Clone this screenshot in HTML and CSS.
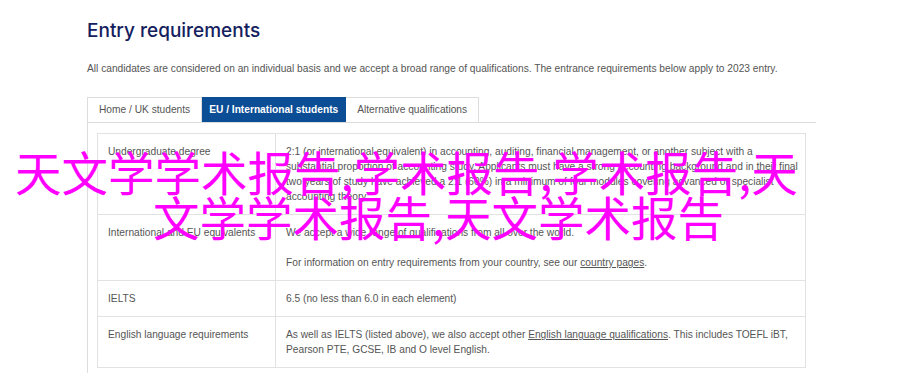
FILE: index.html
```html
<!DOCTYPE html>
<html lang="en">

<head>
  <meta charset="UTF-8">
  <meta name="viewport" content="width=device-width, initial-scale=1.0">
  <title>Entry requirements</title>
  <link rel="stylesheet" href="styles.css">
</head>

<body>
  <div class="page">
    <h1>Entry requirements</h1>
    <p class="intro">All candidates are considered on an individual basis and we accept a broad range of qualifications. The entrance requirements below apply to 2023 entry.</p>

    <div class="tabs">
      <span class="tab">Home / UK students</span>
      <span class="tab active">EU / International students</span>
      <span class="tab">Alternative qualifications</span>
    </div>

    <div class="panel">
      <table class="req">
        <tr class="r1">
          <td class="label">Undergraduate degree</td>
          <td>2:1 (or international equivalent) in accounting, auditing, financial management, or another subject with a substantial proportion of accounting study. Applicants must have a strong accounting background and in their final two years of study have achieved a 2:1 (60%) in a minimum of four modules covering advanced or specialist accounting theory.</td>
        </tr>
        <tr>
          <td class="label">International and EU equivalents</td>
          <td>
            <p>We accept a wide range of qualifications from all over the world.</p>
            <p>For information on entry requirements from your country, see our <a href="#">country pages</a>.</p>
          </td>
        </tr>
        <tr>
          <td class="label">IELTS</td>
          <td>6.5 (no less than 6.0 in each element)</td>
        </tr>
        <tr>
          <td class="label">English language requirements</td>
          <td>As well as IELTS (listed above), we also accept other <a href="#">English language qualifications</a>. This includes TOEFL iBT, Pearson PTE, GCSE, IB and O level English.</td>
        </tr>
      </table>
    </div>
  </div>

  <div class="stamp">
    <span class="l1">天文学学术报告,学术报告,学术报告,天</span>
    <span class="l2">文学学术报告,天文学术报告</span>
  </div>
</body>

</html>
```

FILE: styles.css
```css
* {
  margin: 0;
  padding: 0;
  box-sizing: border-box;
}

body {
  font-family: "Liberation Sans", Arial, sans-serif;
  color: #555;
  background: #fff;
}

.page {
  width: 729px;
  margin-left: 87px;
  padding-top: 19px;
}

h1 {
  font-family: Inter, "Liberation Sans", sans-serif;
  font-size: 19px;
  font-weight: 500;
  line-height: 24px;
  color: #14205e;
}

.intro {
  font-size: 10.2px;
  line-height: 15px;
  margin-top: 18px;
}

.tabs {
  display: flex;
  margin-top: 21px;
  border-bottom: 1px solid #ddd;
}

.tab {
  font-size: 10.2px;
  line-height: 24px;
  padding: 0 11px;
  border: 1px solid #ddd;
  border-bottom: none;
  color: #555;
}

.tab + .tab {
  border-left: none;
}

.tab.active {
  background: #0b4e95;
  border-color: #0b4e95;
  color: #fff;
  font-weight: bold;
  padding: 0 7px;
}

.panel {
  border-left: 1px solid #ddd;
  padding: 10px 10px 5px 9px;
}

.req {
  width: 100%;
  border-collapse: collapse;
  font-size: 10.2px;
  line-height: 15px;
}

.req td {
  border: 1px solid #e2e2e2;
  padding: 10px 6px 10px 10px;
  vertical-align: top;
}

.req td.label {
  width: 178px;
}

.req p + p {
  margin-top: 15px;
}

.req a {
  color: #555;
}

.stamp {
  position: absolute;
  left: 15px;
  top: 148px;
  font-family: "Noto Sans CJK SC", sans-serif;
  font-size: 46.5px;
  line-height: 45px;
  color: #ff00ff;
  white-space: nowrap;
}

.stamp span {
  display: block;
}

.stamp .l2 {
  padding-left: 138px;
}
```
